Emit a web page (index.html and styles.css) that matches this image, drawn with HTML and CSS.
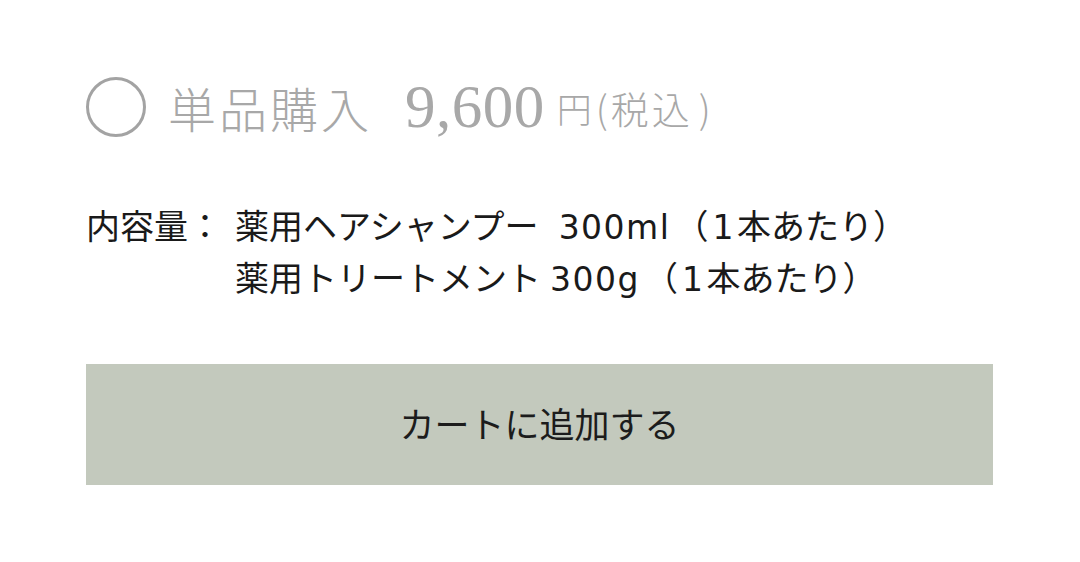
FILE: index.html
```html
<!DOCTYPE html>
<html lang="ja">
<head>
<meta charset="utf-8">
<link rel="stylesheet" href="styles.css">
</head>
<body>
<div class="wrap">
  <div class="option">
    <span class="radio"></span>
    <span class="label">単品購入</span>
    <span class="price">9,600</span>
    <span class="yen">円</span><span class="tax">(税込<span class="close">)</span></span>
  </div>
  <div class="content">
    <div class="term">内容量：</div>
    <div class="desc">
      <div class="row">薬用ヘアシャンプー<span class="sp"></span><span class="num">300ml</span><span class="paren">（<span class="num">1</span>本あたり）</span></div>
      <div class="row">薬用トリートメント<span class="sp2"></span><span class="num">300g</span><span class="paren">（<span class="num">1</span>本あたり）</span></div>
    </div>
  </div>
  <button class="cart">カートに追加する</button>
</div>
</body>
</html>
```
FILE: styles.css
```css
html, body {
  margin: 0;
  padding: 0;
  background: #fff;
}
.wrap {
  padding: 76px 87px 0 86px;
  display: flex;
  flex-direction: column;
}
.option {
  display: flex;
  align-items: center;
  height: 62px;
  color: #a8a8a8;
  font-family: "Liberation Serif", "Noto Sans CJK JP", serif;
}
.radio {
  width: 54px;
  height: 54px;
  border: 3px solid #a3a3a3;
  border-radius: 50%;
  flex: none;
  margin-right: 22px;
}
.label {
  font-family: "Noto Sans CJK JP", sans-serif;
  font-weight: 300;
  font-size: 48px;
  letter-spacing: 3px;
  margin-right: 33px;
}
.price {
  font-size: 61px;
  letter-spacing: 0.5px;
  margin-right: 12px;
}
.yen, .tax {
  font-family: "Noto Sans CJK JP", sans-serif;
  font-weight: 300;
  font-size: 35px;
}
.tax {
  font-size: 38px;
  letter-spacing: 3px;
  margin-left: 4px;
}
.close {
  padding-left: 6px;
}
.content {
  display: flex;
  margin-top: 61px;
  color: #1a1a1a;
  font-family: "Noto Sans CJK JP", sans-serif;
  font-size: 34px;
  line-height: 52px;
}
.term {
  width: 149px;
  flex: none;
}
.row {
  height: 52px;
  white-space: nowrap;
}
.num {
  font-family: "DejaVu Sans", sans-serif;
  font-size: 33px;
  line-height: 1;
  letter-spacing: 1.5px;
}
.paren {
  margin-left: 4px;
}
.paren .num {
  margin: 0 2px 0 4px;
}
.sp {
  display: inline-block;
  width: 20px;
}
.sp2 {
  display: inline-block;
  width: 9px;
}
.cart {
  margin-top: 61px;
  height: 121px;
  border: 0;
  background: #c3c9bd;
  color: #1c1c1c;
  font-family: "Noto Sans CJK JP", sans-serif;
  font-size: 35px;
  padding: 0 0 4px;
  cursor: pointer;
}
```
